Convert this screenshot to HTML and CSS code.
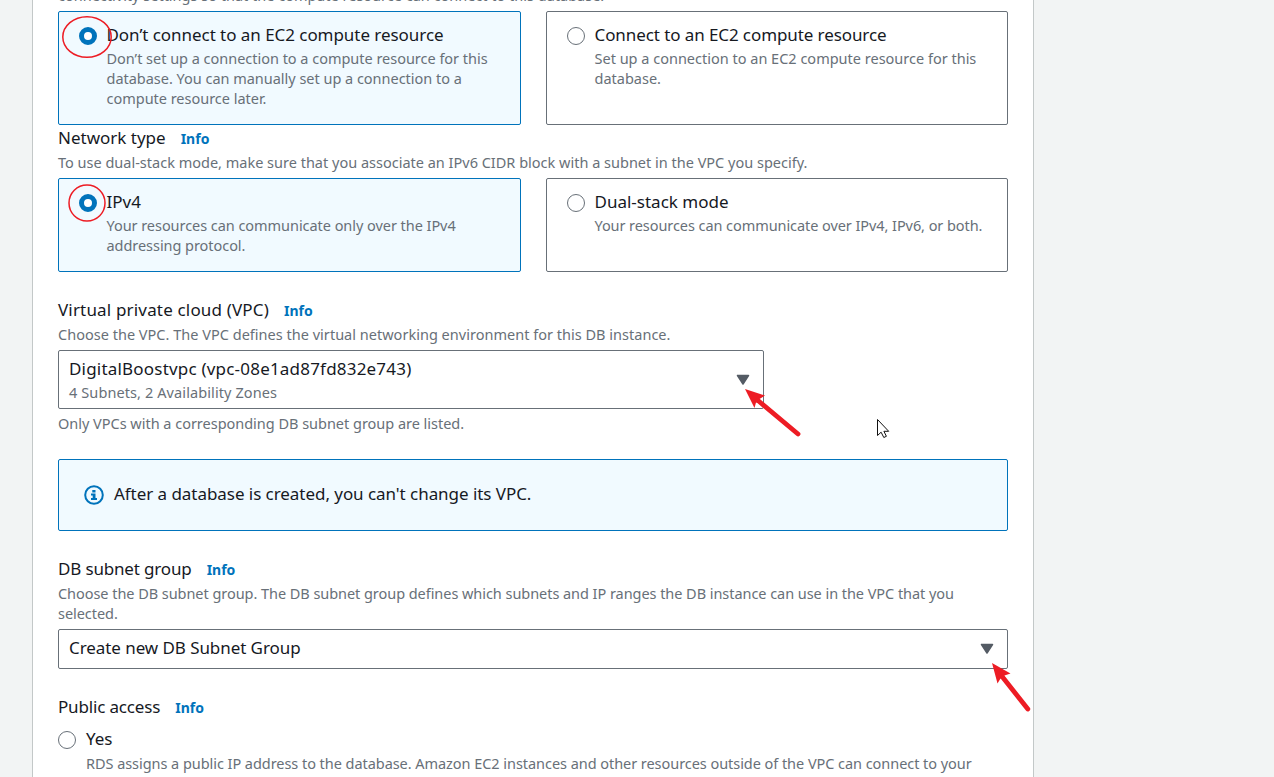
FILE: index.html
```
<!DOCTYPE html>
<html lang="en">
<head>
<meta charset="utf-8">
<title>Connectivity</title>
<link rel="stylesheet" href="styles.css">
</head>
<body>
<main class="panel">
  <p class="hint top-hint">connectivity settings so that the compute resource can connect to this database.</p>
  <div class="tiles tall">
    <label class="tile selected">
      <i class="radio on"></i>
      <span class="tile-text"><b class="title snug">Don’t connect to an EC2 compute resource</b>
      <span class="hint hair">Don’t set up a connection to a compute resource for this<br>database. You can manually set up a connection to a<br>compute resource later.</span></span>
    </label>
    <label class="tile">
      <i class="radio"></i>
      <span class="tile-text"><b class="title tight">Connect to an EC2 compute resource</b>
      <span class="hint">Set up a connection to an EC2 compute resource for this<br>database.</span></span>
    </label>
  </div>

  <h3 class="label first"><span>Network type</span><a class="info">Info</a></h3>
  <p class="hint">To use dual-stack mode, make sure that you associate an IPv6 CIDR block with a subnet in the VPC you specify.</p>
  <div class="tiles">
    <label class="tile selected">
      <i class="radio on"></i>
      <span class="tile-text"><b class="title">IPv4</b>
      <span class="hint snug">Your resources can communicate only over the IPv4<br>addressing protocol.</span></span>
    </label>
    <label class="tile">
      <i class="radio"></i>
      <span class="tile-text"><b class="title">Dual-stack mode</b>
      <span class="hint close">Your resources can communicate over IPv4, IPv6, or both.</span></span>
    </label>
  </div>

  <h3 class="label"><span class="wide">Virtual private cloud (VPC)</span><a class="info">Info</a></h3>
  <p class="hint open">Choose the VPC. The VPC defines the virtual networking environment for this DB instance.</p>
  <div class="select vpc">
    <div><div class="title wider">DigitalBoostvpc (vpc-08e1ad87fd832e743)</div><div class="hint loose">4 Subnets, 2 Availability Zones</div></div>
    <svg class="caret" viewBox="0 0 14 12"><path d="M1.500 1.500h11L7 10z"/></svg>
  </div>
  <p class="hint below hair">Only VPCs with a corresponding DB subnet group are listed.</p>

  <div class="alert">
    <svg class="info-icon" viewBox="0 0 20 20"><circle cx="10" cy="10" r="8.800"/><path d="M8.300 5h3.200v2.600H8.300zM7 8.600h4.500v4.500H13V15H7v-1.900h1.700v-2.600H7z"/></svg>
    <span class="title snug">After a database is created, you can't change its VPC.</span>
  </div>

  <h3 class="label"><span class="narrow">DB subnet group</span><a class="info">Info</a></h3>
  <p class="hint snug">Choose the DB subnet group. The DB subnet group defines which subnets and IP ranges the DB instance can use in the VPC that you<br>selected.</p>
  <div class="select">
    <div class="title close">Create new DB Subnet Group</div>
    <svg class="caret" viewBox="0 0 14 12"><path d="M1.500 1.500h11L7 10z"/></svg>
  </div>

  <h3 class="label"><span class="narrow">Public access</span><a class="info">Info</a></h3>
  <label class="option">
    <i class="radio"></i>
    <span class="tile-text"><b class="title">Yes</b>
    <span class="hint snug">RDS assigns a public IP address to the database. Amazon EC2 instances and other resources outside of the VPC can connect to your</span></span>
  </label>
</main>

<svg class="marks" viewBox="0 0 1274 777">
  <g class="ring"><ellipse cx="87" cy="37" rx="24.200" ry="20.300"/><circle cx="87" cy="203" r="18"/></g>
  <g class="arrow">
    <path d="M745 389L765 395.500L759.500 399L758 403L756 402.500L754.500 408Z"/>
    <path class="shaft" d="M758 400.500L798 434"/>
    <path d="M992 663L1010.500 673.500L1004.500 675.500L1002 679L1000.500 678.500L997.500 683.500Z"/>
    <path class="shaft" d="M1002.500 677L1027.800 709"/>
  </g>
  <path class="pointer" d="M877.500 419.500v16l3.600-3.300 2.700 5.300 2.600-1.200-2.500-5h4.800z"/>
</svg>
</body>
</html>
```
FILE: styles.css
```
* { box-sizing: border-box; }
html, body { margin: 0; height: 777px; overflow: hidden; }
body {
  background: #f2f4f4;
  color: #16191f;
  font-family: "Noto Sans", "Open Sans", sans-serif;
  font-size: 17px;
  position: relative;
}
.panel {
  width: 1002px;
  height: 800px;
  margin-left: 32px;
  padding: 0 25px;
  border: solid #c3c8c8;
  border-width: 0 1px;
  background: #fff;
  overflow: hidden;
}
p { margin: 0; }
.title { display: block; font-weight: 400; font-size: 17px; line-height: 22px; white-space: nowrap; }
.hint { display: block; font-size: 14.500px; line-height: 20px; color: #687078; white-space: nowrap; }
.hair { letter-spacing: -0.020px; }
.snug { letter-spacing: -0.050px; }
.close { letter-spacing: -0.070px; }
.tight { letter-spacing: -0.090px; }
.narrow { letter-spacing: -0.160px; }
.open { letter-spacing: 0.015px; }
.loose { letter-spacing: 0.100px; }
.wide { letter-spacing: 0.170px; }
.wider { letter-spacing: 0.200px; }
.top-hint { margin-top: -15px; }
.tiles { display: grid; grid-template-columns: 463px 462px; column-gap: 25px; height: 94px; margin-top: 6px; }
.tiles.tall { height: 114px; }
.tile {
  display: flex;
  gap: 10px;
  padding: 12px 0 0 20px;
  border: 1px solid #687078;
  border-radius: 2px;
}
.tile.selected { border-color: #0073bb; background: #f1faff; }
.tile-text { display: flex; flex-direction: column; gap: 2px; }
.tile .tile-text { margin-left: -0.500px; }
.option .tile-text { gap: 3px; }
.radio {
  flex: none;
  width: 18px;
  height: 18px;
  margin-top: 2.500px;
  border: 1.500px solid #687078;
  border-radius: 50%;
  background: #fff;
}
.radio.on { border: 5px solid #0073bb; }
.label { display: flex; align-items: center; gap: 15px; height: 26px; margin: 24px 0 2px; font-size: 17px; font-weight: 400; white-space: nowrap; }
.label.first { margin-top: -1px; }
.info { margin-top: 2px; color: #0073bb; font-size: 14px; font-weight: 700; }
.select {
  display: flex;
  justify-content: space-between;
  align-items: center;
  height: 40px;
  margin-top: 6px;
  padding: 0 13px 2px 10px;
  border: 1px solid #687078;
  border-radius: 2px;
}
.select.vpc { width: 706px; height: 59px; }
.select.vpc .title { margin: 2px 0 2px; }
.caret { width: 14px; height: 12px; margin-top: 2px; fill: #545b64; stroke: #545b64; stroke-width: 1.500; stroke-linejoin: round; }
.below { margin-top: 4px; }
.alert {
  display: flex;
  align-items: center;
  gap: 10px;
  height: 72px;
  margin-top: 26px;
  padding-left: 25px;
  border: 1px solid #0073bb;
  border-radius: 2px;
  background: #f1faff;
}
.alert .title { margin-bottom: 2px; }
.info-icon { width: 20px; height: 20px; fill: #0073bb; }
.info-icon circle { fill: none; stroke: #0073bb; stroke-width: 2; }
.option { display: flex; gap: 10px; margin-top: 9px; }
.marks { position: absolute; left: 0; top: 0; width: 1274px; height: 777px; pointer-events: none; }
.ring { fill: none; stroke: #ed1c24; stroke-width: 1.500; }
.arrow { fill: #ed1c24; }
.shaft { stroke: #ed1c24; stroke-width: 4.800; stroke-linecap: round; }
.pointer { fill: #fff; stroke: #111; stroke-width: 1; }
```
